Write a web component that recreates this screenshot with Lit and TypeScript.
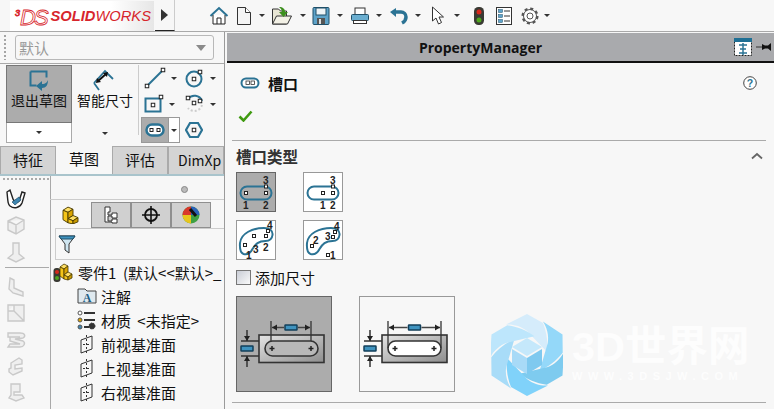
import { LitElement, html, css, svg } from "lit";
import { customElement } from "lit/decorators.js";

const BLUE = "#2b7394";

const icon = (w: number, h: number, body: unknown) =>
  html`<svg width=${w} height=${h} viewBox="0 0 ${w} ${h}">${body}</svg>`;

const handle = (x: number, y: number, s = 5) =>
  svg`<rect x=${x - s / 2} y=${y - s / 2} width=${s} height=${s} fill="#fff" stroke="#222"/>`;

const drop = html`<span class="drop"></span>`;

// top bar
const home = icon(20, 20, svg`
  <path d="M1.500 10 10 2l8.500 8" fill="none" stroke="#2b7394" stroke-width="2"/>
  <path d="M4 9v9h12V9" fill="#fff" stroke="#222"/>
  <path d="M8 18v-6h4v6" fill="none" stroke="#222"/>`);
const newDoc = icon(16, 20, svg`<path d="M1.500 1.500h8l5 5v12h-13z" fill="#f4f4f4" stroke="#333"/><path d="M9.500 1.500v5h5" fill="#fff" stroke="#333"/>`);
const openDoc = icon(22, 20, svg`
  <path d="M1.500 18V3h6l2 2h6v13z" fill="#e9e6d4" stroke="#333"/>
  <path d="M1.500 18l4-8h15l-4 8z" fill="#f3f1e6" stroke="#333"/>
  <path d="M8 1c4 0 6 2 6 5h3l-4.500 5L8 6h3c0-2-1-3-3-5z" fill="#3d8f1e"/>`);
const save = icon(18, 20, svg`
  <rect x="1" y="1.500" width="16" height="17" rx="1" fill="#5ea3c9" stroke="#1f4f68"/>
  <rect x="4" y="2" width="10" height="7" fill="#eef4f7" stroke="#1f4f68"/>
  <rect x="5" y="12" width="8" height="6" fill="#555"/><rect x="7" y="13" width="2" height="5" fill="#ddd"/>`);
const printer = icon(18, 20, svg`
  <rect x="4" y="2" width="10" height="7" fill="#fff" stroke="#333"/>
  <rect x="0.500" y="8.500" width="17" height="6" rx="1" fill="#6aaed0" stroke="#1f4f68"/>
  <rect x="2.500" y="14.500" width="13" height="3" fill="#fff" stroke="#333"/>`);
const undo = icon(18, 20, svg`
  <path d="M5 6h6a5 5 0 0 1 5 5c0 3-2 5-4 6" fill="none" stroke="#2b7394" stroke-width="3.500"/>
  <path d="M0 6l6-4v9z" fill="#2b7394"/>`);
const cursor = icon(14, 20, svg`<path d="M1.500 1v14l3.500-3 2.500 6 3-1.500-2.500-5.500h4.500z" fill="#fff" stroke="#333"/>`);
const light = icon(12, 20, svg`
  <rect x="1" y="1" width="10" height="18" rx="4.500" fill="#3a3a34"/>
  <circle cx="6" cy="6" r="2.500" fill="#d8281c"/><circle cx="6" cy="14" r="2.500" fill="#4fa61e"/>`);
const listIcon = icon(16, 20, svg`
  <rect x="0.500" y="1.500" width="15" height="17" fill="#fff" stroke="#333"/>
  ${[5, 10, 15].map(
    (y) => svg`<rect x="2.500" y=${y - 1.500} width="4" height="3" fill="#5ea3c9" stroke="#1f4f68" stroke-width=".5"/>
    <path d="M8 ${y}h6" stroke="#333"/>`
  )}`);
const gear = icon(18, 18, svg`
  <circle cx="9" cy="9" r="6.500" fill="#fff" stroke="#555" stroke-width="1"/>
  <circle cx="9" cy="9" r="7.300" fill="none" stroke="#555" stroke-width="2.500" stroke-dasharray="3 2.730"/>
  <circle cx="9" cy="9" r="3" fill="#fff" stroke="#555"/>`);

// sketch tools
const slotShape = (w: number, h: number, sw = 2.500) => svg`
  <rect x="1.500" y="1.500" width=${w - 3} height=${h - 3} rx=${(h - 3) / 2} fill="#fff" stroke=${BLUE} stroke-width=${sw}/>`;
const lineTool = icon(22, 22, svg`<path d="M3 19 19 3" stroke=${BLUE} stroke-width="2"/>${handle(3, 19, 3.500)}${handle(19, 3, 3.500)}`);
const circleTool = icon(20, 20, svg`
  <circle cx="9" cy="11" r="7.500" fill="none" stroke=${BLUE} stroke-width="2"/>${handle(9, 11, 3.500)}${handle(15, 4, 3.500)}`);
const rectTool = icon(20, 20, svg`
  <rect x="1.500" y="4.500" width="15" height="13" fill="none" stroke=${BLUE} stroke-width="2"/>${handle(9, 11, 3.500)}${handle(17, 3, 3.500)}`);
const arcTool = icon(20, 20, svg`
  <path d="M3 5a8 8 0 0 1 14 2" fill="none" stroke=${BLUE} stroke-width="2"/>
  <path d="M17 11a8 8 0 0 1-14 3" fill="none" stroke="#ccc" stroke-width="2" stroke-dasharray="2 2"/>
  ${handle(3, 4, 3.500)}${handle(9, 9, 3.500)}${handle(15, 7, 3.500)}`);
const slotTool = icon(20, 14, svg`${slotShape(20, 14)}${handle(6.500, 7, 3)}${handle(13.500, 7, 3)}`);
const polyTool = icon(18, 18, svg`
  <path d="M5 2h8l4 7-4 7H5L1 9z" fill="none" stroke=${BLUE} stroke-width="2.200"/>${handle(9, 9, 3.500)}`);
const exitIcon = icon(24, 24, svg`
  <path d="M3.500 3.500h16v6M3.500 3.500v14h6" fill="none" stroke=${BLUE} stroke-width="2"/>
  <path d="M9 18l6-5v3c4 0 5-2 6-4 0 5-2 8-6 8v3z" fill="#2b7394"/>`);
const dimIcon = icon(26, 24, svg`
  <path d="M2 15 13 3l8 8M7 22l-5-7" fill="none" stroke=${BLUE} stroke-width="1.800"/>
  <path d="M6 13l8-7" stroke="#111" stroke-width="2"/>
  <path d="M4 15l1-5 4 4zM16 4l-5 1 4 4z" fill="#111"/>`);

// type buttons
const typeIcon = (body: unknown) => icon(38, 38, body);
const num = (x: number, y: number, t: string) =>
  svg`<text x=${x - 3} y=${y + 3.500} font-family="Liberation Sans" font-weight="700" font-size="10" fill="#222">${t}</text>`;
const centerSlot = typeIcon(svg`
  <rect x="3.500" y="13.500" width="31" height="13" rx="6.500" fill="none" stroke=${BLUE} stroke-width="2"/>
  ${handle(9, 20, 3)}${handle(29, 20, 3)}${handle(29, 13.500, 3)}
  ${num(29, 7, "3")}${num(9, 32, "1")}${num(29, 32, "2")}`);
const straightSlot = typeIcon(svg`
  <rect x="3.500" y="13.500" width="31" height="13" rx="6.500" fill="none" stroke=${BLUE} stroke-width="2"/>
  ${handle(19, 20, 3)}${handle(29, 20, 3)}${handle(29, 13.500, 3)}
  ${num(29, 7, "3")}${num(19, 32, "1")}${num(29, 32, "2")}`);
const curve = svg`<path d="M3 22C4 12 16 7 27 7c6 0 9 3 8.500 7-.5 4-3 6-7 6-7 0-10 3-13 8-2 4-5 6-9 5-3-1-4-4-3.500-11z" fill="none" stroke=${BLUE} stroke-width="2"/>`;
const arcSlot = typeIcon(svg`${curve}
  ${handle(8, 24, 3)}${handle(17, 15, 3)}${handle(29, 15, 3)}${handle(31, 10, 3)}
  ${num(33, 4, "4")}${num(19, 28, "3")}${num(29, 26, "2")}${num(12, 34, "1")}`);
const arcSlot2 = typeIcon(svg`${curve}
  ${handle(8, 25, 3)}${handle(29, 16, 3)}${handle(31, 11, 3)}${handle(24, 34, 3)}
  ${num(33, 5, "4")}${num(12, 19, "2")}${num(24, 15, "3")}${num(29, 34, "1")}`);

// add-dimension pictures
const cross = (x: number, y: number) => svg`<path d="M${x - 2.500} ${y}h5M${x} ${y - 2.500}v5" stroke="#222" stroke-width="1.500"/>`;
const badge = (x: number, y: number) =>
  svg`<rect x=${x} y=${y} width="12" height="5" rx=".5" fill="#3f93bf" stroke="#123f5a" stroke-width="1.500"/>`;
const dimPicture = (a: number, b: number, slotFill: string, id: string) =>
  icon(94, 94, svg`
    <defs><linearGradient id=${id} x1="0" x2="1" y1="0" y2="1"><stop offset="0" stop-color="#e4e4e4"/><stop offset="1" stop-color="#8e8e8e"/></linearGradient></defs>
    <rect x="23" y="39" width="65" height="27.500" fill="url(#${id})" stroke="#333" stroke-width="1.600"/>
    <rect x="29" y="45" width="53" height="15" rx="7.500" fill=${slotFill} stroke="#333" stroke-width="1.600"/>
    ${cross(36, 52.500)}${cross(75, 52.500)}
    <path d="M${a} 25v${b === 82 ? 27 : 20}M${b} 25v${b === 82 ? 27 : 20}" stroke="#333" stroke-width="1.300"/>
    <path d="M${a + 1} 31.500h${(b - a) / 2 - 8}M${b - 1} 31.500h-${(b - a) / 2 - 8}" stroke="#444" stroke-width="1.300"/>
    <path d="M${a + 1} 31.500l5-3v6zM${b - 1} 31.500l-5-3v6z" fill="#222"/>
    ${badge((a + b) / 2 - 6, 29)}
    <path d="M5 45h18M5 60h18" stroke="#333" stroke-width="1.300"/>
    <path d="M11 34v11M11 60v11" stroke="#333" stroke-width="1.500"/>
    <path d="M11 45l-3-5h6zM11 60l-3 5h6z" fill="#222"/>
    ${badge(5, 50)}`);

// sidebar icons, greyed out apart from the first
const ghost = (d: string) => icon(22, 22, svg`<path d=${d} fill="#efefef" stroke="#c9c9c9" stroke-width="1.400"/>`);
const sideIcons = [
  ghost("M3 7l8-4 8 3v9l-8 5-8-4zM3 7l8 4 8-5M11 11v9"),
  ghost("M8 2h6v11l5 4-8 4-8-4 5-4z"),
  null,
  ghost("M5 2l4 2v8l9 4v4l-10-3-4-4z"),
  ghost("M3 3h16v16H3zM3 9h6V3M9 9l10 10"),
  ghost("M3 4h12c5 0 6 3 3 5l-8 1 8 2c3 2 1 6-3 6H3l2-3h10l-10-3V8h10H3z"),
  ghost("M6 8l8-5 3 2v4l-7 1v4l7-1v3l-9 4-4-3v-3l2-1z"),
  ghost("M6 3h9v8H9v3h8l2 3-8 3-7-3 2-3z"),
];
const magnet = icon(22, 22, svg`
  <path d="M2 4l3-2 3 9c1 3 4 4 6 2l3-9 3 1-3 10c-2 5-8 6-12 3-2-2-2-3-3-14z" fill="#fff" stroke="#222" stroke-width="1.400"/>
  <path d="M7 14l7-5 2 3-6 5z" fill="#3f86b0" stroke="#123f5a" stroke-width=".6"/>`);

// tree: the yellow L block is shared by the tab and the root row
const block = svg`
  <g stroke="#4a3b00" stroke-width=".8" stroke-linejoin="round">
    <path d="M0 5 4 2l4 2-4 3z" fill="#ffe066"/>
    <path d="M0 5v9l4 3V7z" fill="#f5c518"/>
    <path d="M4 7l4-3v6l-4 3z" fill="#d9a400"/>
    <path d="M4 13l4-3 4 2-4 3z" fill="#ffe066"/>
    <path d="M4 13v4l4 1v-3z" fill="#f5c518"/>
    <path d="M8 15l4-3v4l-4 2z" fill="#c99a00"/>
  </g>`;
const partIcon = icon(20, 18, svg`<g transform="translate(2 -1) scale(1.250 1.050)">${block}</g>`);
const partTree = icon(22, 20, svg`
  <rect x="0.500" y="6" width="7" height="14" rx="3" fill="#3a3a34"/>
  <circle cx="4" cy="10" r="2" fill="#d8281c"/><circle cx="4" cy="16" r="2" fill="#4fa61e"/>
  <g transform="translate(7 0)">${block}</g>`);
const annot = icon(20, 16, svg`
  <path d="M1 15V1h7l2 2h9v12z" fill="#dfe9ef" stroke="#444"/>
  <text x="10" y="13.500" text-anchor="middle" font-family="Liberation Serif" font-weight="700" font-size="12" fill="#1f5f86">A</text>`);
const material = icon(20, 20, svg`
  ${[3, 10, 17].map(
    (y, i) => svg`<circle cx="3" cy=${y} r="2" fill=${i == 1 ? "#e0a500" : i == 2 ? "#3f86b0" : "#fff"} stroke="#555"/>
      <path d="M7 ${y}h${i == 2 ? 5 : 11}" stroke="#333" stroke-width="2"/>`
  )}
  <circle cx="15" cy="16" r="3" fill="#333" stroke="#333" stroke-dasharray="1.500 1"/>`);
const plane = icon(14, 20, svg`
  <path d="M1 6l11-4v13L1 19z" fill="none" stroke="#333"/>
  <path d="M6.500 1v19M3 10.500h7" fill="none" stroke="#333" stroke-dasharray="2 2"/>`);

const rows = [
  { icon: annot, label: "注解" },
  { icon: material, label: "材质 <未指定>" },
  { icon: plane, label: "前视基准面" },
  { icon: plane, label: "上视基准面" },
  { icon: plane, label: "右视基准面" },
];

const blades = ["#d5ecfb", "#94d8f9", "#7ecbef", "#80d2fa", "#a8dcf8", "#bde6fc"];
const hexLogo = icon(72, 82, svg`
  <g transform="translate(36 41)">
    ${blades.map(
      (c, i) => svg`<path transform="rotate(${i * 60})" fill=${c}
        d="M-21-30.500 0-41 16-32C20-22 21-12 20-3L0-24C-6-29-14-31-21-30.500z"/>`
    )}
    <path d="M0-17 15-8 0 1-15-8z" fill="#c5e8fb"/>
    <path d="M-15-6 0 3V19L-15 10z" fill="#a8daf7"/>
    <path d="M15-6 0 3V19L15 10z" fill="#7fc9ef"/>
  </g>`);

@customElement("app-root")
export class AppRoot extends LitElement {
  static styles = css`
    :host {
      display: block;
      width: 774px;
      height: 409px;
      overflow: hidden;
      position: relative;
      background: #f7f7f7;
      font-family: "Noto Sans CJK SC", "Liberation Sans", sans-serif;
      color: #111;
    }
    svg { display: block; flex: none; }
    .drop {
      flex: none;
      width: 0;
      height: 0;
      border: 3px solid transparent;
      border-top: 3.500px solid #333;
      border-bottom: 0;
    }

    /* top bar */
    .top { display: flex; align-items: center; height: 31px; }
    .logo {
      margin-left: 10px;
      width: 144px;
      height: 30px;
      flex: none;
      display: flex;
      align-items: center;
      gap: 4px;
      padding-left: 5px;
      box-sizing: border-box;
      background: linear-gradient(90deg, #fff, #fff 70%, #e6e6e6);
      color: #d7252c;
      font-family: "Liberation Sans", sans-serif;
      font-style: italic;
      white-space: nowrap;
    }
    .ds {
      font-size: 22px;
      letter-spacing: -2px;
      line-height: 26px;
      color: transparent;
      -webkit-text-stroke: 0.800px #d7252c;
    }
    .ds i { font-size: 9px; vertical-align: 9px; letter-spacing: 0; }
    .solid { font-size: 14.700px; font-weight: 700; }
    .solid i { font-weight: 400; }
    .more {
      width: 20px;
      height: 31px;
      margin-left: 1px;
      flex: none;
      display: flex;
      align-items: center;
      justify-content: center;
      box-sizing: border-box;
      border-bottom: 1px solid #222;
      border-right: 1px solid #ccc;
    }
    .more::before {
      content: "";
      border: 6px solid transparent;
      border-left: 7px solid #333;
      border-right: 0;
    }
    .quick { display: flex; align-items: center; margin-left: 34px; height: 31px; }
    .g { display: flex; align-items: center; gap: 7px; margin-right: 6px; }
    .g:first-child { margin-right: 7px; }
    .g.wide { margin-right: 8px; }
    .g.wider { margin-right: 10px; }
    .g.arrow { gap: 9px; margin-right: 13px; }
    .g.plain { margin-right: 11px; }
    .g.last { margin-right: 9px; }
    .g.cog { gap: 5px; }

    /* main split */
    .main { display: flex; height: 378px; border-top: 1px solid #a9a9a9; }
    .left { width: 224px; flex: none; overflow: hidden; border-right: 1px solid #9a9a9a; }
    .right { flex: 1; margin-left: 2px; min-width: 0; }

    .combo-row {
      height: 31px;
      display: flex;
      align-items: center;
      gap: 9px;
      padding-left: 4px;
      border-bottom: 1px solid #a9a9a9;
    }
    .grip {
      width: 2px;
      height: 25px;
      flex: none;
      background: repeating-linear-gradient(#a5a5a5 0 2px, transparent 2px 4px);
    }
    .combo {
      width: 199px;
      height: 25px;
      box-sizing: border-box;
      border: 1px solid #b8b8b8;
      border-radius: 3px;
      display: flex;
      align-items: center;
      justify-content: space-between;
      padding: 0 7px 0 3px;
      font-size: 15px;
      color: #9a9a9a;
    }
    .combo .drop { border-width: 5px; border-top-width: 6px; border-top-color: #8a8a8a; border-bottom: 0; }

    /* ribbon */
    .ribbon { display: flex; height: 81px; padding-top: 1px; padding-left: 6px; box-sizing: border-box; }
    .big {
      width: 66px;
      flex: none;
      display: flex;
      flex-direction: column;
      align-items: center;
      font-size: 14px;
      line-height: 20px;
      white-space: nowrap;
    }
    .big .face { height: 58px; width: 100%; box-sizing: border-box; display: flex; flex-direction: column; align-items: center; padding-top: 2px; border: 1px solid transparent; }
    .big .face span { margin-top: -2px; }
    .big .tail { height: 20px; width: 100%; box-sizing: border-box; display: flex; align-items: center; justify-content: center; }
    .big.on .face { background: #acacac; border-color: #777; }
    .big.on .tail { border: 1px solid #aaa; border-top: 0; background: #fff; }
    .sep { width: 1px; height: 70px; background: #ccc; margin: 0 1px 0 0; flex: none; }
    .tools {
      display: grid;
      grid-template-columns: 41px 42px;
      grid-template-rows: 26px 26px 26px;
      align-items: center;
      margin-left: 1px;
    }
    .tool { display: flex; align-items: center; gap: 5px; padding-left: 3px; }
    .slotbtn {
      display: flex;
      align-items: stretch;
      height: 26px;
      width: 39px;
      box-sizing: border-box;
      border: 1px solid #999;
    }
    .slotbtn .on { width: 26px; background: #acacac; display: flex; align-items: center; justify-content: center; }
    .slotbtn .rest { flex: 1; background: #fff; display: flex; align-items: center; justify-content: center; border-left: 1px solid #999; }

    /* tabs */
    .tabs { display: flex; height: 28px; margin-top: 1px; border-bottom: 2px solid #a9c4cc; }
    .tab {
      width: 56px;
      box-sizing: border-box;
      background: #d4d4d4;
      border: 1px solid #aaa;
      border-bottom: 0;
      font-size: 15px;
      text-align: center;
      line-height: 26px;
      white-space: nowrap;
      overflow: hidden;
    }
    .tab.on { background: #f7f7f7; border: 0; }
    .tab.latin { text-align: left; padding-left: 9px; font-size: 14px; }

    /* feature manager */
    .fm { display: flex; height: 236px; }
    .side { width: 51px; flex: none; border-right: 1px solid #a9a9a9; box-sizing: border-box; padding: 2px 0 0 3px; }
    .side .dots { width: 46px; height: 2px; background: repeating-linear-gradient(90deg, #aaa 0 2px, transparent 2px 4px); margin-bottom: 6px; }
    .side .ico { height: 26.300px; display: flex; align-items: center; padding-left: 2px; }
    .side hr { border: 0; border-top: 1px solid #aaa; margin: 2px 1px 6px 2px; }
    .tree { flex: 1; min-width: 0; }
    .knob { height: 23px; display: flex; align-items: center; padding-left: 131px; border-bottom: 1px solid #ccc; margin-left: -1px; }
    .knob::before { content: ""; width: 5px; height: 5px; border-radius: 50%; background: #bbb; border: 1px solid #888; margin-top: 4px; }
    .fmtabs { display: flex; margin-top: 2px; height: 26px; }
    .fmtab { width: 40px; box-sizing: border-box; background: #d0d0d0; border: 1px solid #8f8f8f; display: flex; align-items: center; justify-content: center; }
    .fmtab.on { background: #f7f7f7; border: 0; }
    .filter { height: 32px; margin-left: 4px; border: 1px solid #ccc; border-right: 0; display: flex; align-items: center; padding-left: 2px; box-sizing: border-box; }
    .part { display: flex; align-items: center; gap: 3px; height: 24px; margin: 0 0 0 2px; font-size: 15px; white-space: nowrap; overflow: hidden; }
    .row { display: flex; align-items: center; height: 24px; font-size: 15px; white-space: nowrap; padding-left: 26px; gap: 4px; word-spacing: 3px; }
    .row .slotico { width: 20px; display: flex; justify-content: center; flex: none; }

    /* property manager */
    .pm-head {
      height: 30px;
      margin-top: 1px;
      box-sizing: border-box;
      background: #a9aaad;
      border-bottom: 2px solid #111;
      display: flex;
      align-items: center;
      justify-content: flex-end;
      gap: 4px;
      padding-right: 2px;
      position: relative;
    }
    .pm-head b { position: absolute; left: 0; right: 0; padding-right: 40px; text-align: center; font: 700 14px "Open Sans", "Liberation Sans", sans-serif; }
    .pm-body { padding: 0 8px 0 5px; }
    .name { display: flex; align-items: center; height: 40px; padding: 0 8px; font-size: 15px; font-weight: 700; gap: 8px; }
    .name .help { margin-left: auto; margin-right: 1px; }
    .ok { height: 26px; padding-left: 6px; display: flex; align-items: center; }
    .rule { border: 0; border-top: 1px solid #aaa; margin: 0; }
    .rule.first { margin-top: 11px; }
    .section { display: flex; align-items: center; justify-content: space-between; height: 29px; padding: 0 3px 2px 4px; font-size: 15.500px; font-weight: 700; color: #333; }
    .types { display: grid; grid-template-columns: 40px 40px; grid-auto-rows: 40px; column-gap: 27px; row-gap: 8px; margin-left: 4px; }
    .type { box-sizing: border-box; border: 1px solid #999; background: #fff; display: flex; align-items: center; justify-content: center; }
    .type.on, .pic.on { background: #acacac; border-color: #666; }
    .check { display: flex; align-items: center; gap: 4px; height: 20px; margin: 7px 0 0 4px; font-size: 15px; }
    .box { width: 15px; height: 15px; box-sizing: border-box; border: 1px solid #777; background: linear-gradient(135deg, #c9cdd6, #fafafa); }
    .pics { display: flex; gap: 27px; margin: 9px 0 10px 4px; }
    .pic { width: 96px; height: 96px; box-sizing: border-box; border: 1px solid #999; }
    .pic svg { margin: -1px; }

    /* watermark lies over the panel */
    .mark { position: absolute; left: 491px; top: 314px; display: flex; gap: 9px; pointer-events: none; }
    .mark .t { color: #fdfdfd; font-weight: 700; font-size: 41.500px; line-height: 42px; margin-top: 12px; white-space: nowrap; font-family: "Liberation Sans", "Noto Sans CJK SC", sans-serif; }
    .mark .u { font: 700 11px/12px "Liberation Sans", sans-serif; letter-spacing: 5.500px; margin-top: 2px; }
  `;

  render() {
    return html`
      <div class="top">
        <div class="logo">
          <span class="ds"><i>3</i>DS</span>
          <span class="solid">SOLID<i>WORKS</i></span>
        </div>
        <div class="more"></div>
        <div class="quick">
          <div class="g">${home}</div>
          <div class="g">${newDoc}${drop}</div>
          <div class="g">${openDoc}${drop}</div>
          <div class="g wide">${save}${drop}</div>
          <div class="g wide">${printer}${drop}</div>
          <div class="g wider">${undo}${drop}</div>
          <div class="g arrow">${cursor}${drop}</div>
          <div class="g plain">${light}</div>
          <div class="g last">${listIcon}</div>
          <div class="g cog">${gear}${drop}</div>
        </div>
      </div>

      <div class="main">
        <div class="left">
          <div class="combo-row">
            <div class="grip"></div>
            <div class="combo">默认<span class="drop"></span></div>
          </div>
          <div class="ribbon">
            <div class="big on">
              <div class="face">${exitIcon}<span>退出草图</span></div>
              <div class="tail">${drop}</div>
            </div>
            <div class="big">
              <div class="face">${dimIcon}<span>智能尺寸</span></div>
              <div class="tail">${drop}</div>
            </div>
            <div class="sep"></div>
            <div class="tools">
              <div class="tool">${lineTool}${drop}</div>
              <div class="tool">${circleTool}${drop}</div>
              <div class="tool">${rectTool}${drop}</div>
              <div class="tool">${arcTool}${drop}</div>
              <div class="slotbtn">
                <div class="on">${slotTool}</div>
                <div class="rest">${drop}</div>
              </div>
              <div class="tool">${polyTool}</div>
            </div>
          </div>
          <div class="tabs">
            <div class="tab">特征</div>
            <div class="tab on">草图</div>
            <div class="tab">评估</div>
            <div class="tab latin">DimXp</div>
          </div>
          <div class="fm">
            <div class="side">
              <div class="dots"></div>
              <div class="ico">${magnet}</div>
              ${sideIcons.map((i) => (i ? html`<div class="ico">${i}</div>` : html`<hr />`))}
            </div>
            <div class="tree">
              <div class="knob"></div>
              <div class="fmtabs">
                <div class="fmtab on">${partIcon}</div>
                <div class="fmtab">
                  ${icon(16, 18, svg`<path d="M2 1h5v5H5v3h4V7h5v5H9v-2H5v5h4v-2h5v4H9v-1H2z" fill="#fff" stroke="#333"/>`)}
                </div>
                <div class="fmtab">
                  ${icon(18, 18, svg`<circle cx="9" cy="9" r="6" fill="none" stroke="#111" stroke-width="1.800"/><path d="M9 0v18M0 9h18" stroke="#111" stroke-width="1.600"/>`)}
                </div>
                <div class="fmtab">
                  ${icon(18, 18, svg`
                    <circle cx="9" cy="9" r="8.500" fill="#3ea043"/>
                    <path d="M9 .5A8.500 8.500 0 0 0 .5 9H9z" fill="#d9382c"/>
                    <path d="M.5 9A8.500 8.500 0 0 0 9 17.500V9z" fill="#e8c51d"/>
                    <path d="M9 .5A8.500 8.500 0 0 1 17.500 9L9 9z" fill="#2b62b8"/>
                    <path d="M8 3l6 7" stroke="#111" stroke-width="3"/>`)}
                </div>
              </div>
              <div class="filter">
                ${icon(18, 20, svg`<path d="M1 2h16l-6 8v9l-4-3v-6z" fill="#cfe6f1" stroke="#333"/><path d="M1 2h16l-2 3H3z" fill="#3f93bf" stroke="#1f4f68"/>`)}
              </div>
              <div class="part">${partTree}<span>零件1 &nbsp;(默认&lt;&lt;默认&gt;_</span></div>
              ${rows.map(
                (r) => html`<div class="row"><span class="slotico">${r.icon}</span><span>${r.label}</span></div>`
              )}
            </div>
          </div>
        </div>

        <div class="right">
          <div class="pm-head">
            <b>PropertyManager</b>
            ${icon(18, 18, svg`
              <rect x=".5" y=".5" width="17" height="17" fill="#fff" stroke="#222" stroke-dasharray="2 1"/>
              <rect x="0" y="0" width="18" height="4" fill="#1f6f94"/>
              <path d="M9 5v12M5 7h8M5 15h8M6 11h6" stroke="#2b7394" stroke-width="1.500"/>`)}
            ${icon(16, 10, svg`<path d="M0 5h6" stroke="#333"/><path d="M6 2l3 1.500h3L15 1v8l-3-2.500H9L6 8z" fill="#111"/>`)}
          </div>
          <div class="pm-body">
            <div class="name">
              ${icon(20, 12, svg`${slotShape(20, 12, 2)}<rect x="6" y="4" width="3.500" height="3.500" fill="#fff" stroke="#333" stroke-width=".8"/><rect x="11" y="4" width="3.500" height="3.500" fill="#fff" stroke="#333" stroke-width=".8"/>`)}
              <span>槽口</span>
              <span class="help">
                ${icon(14, 14, svg`
                  <circle cx="7" cy="7" r="6.300" fill="#fff" stroke="#444"/>
                  <text x="7" y="11" text-anchor="middle" font-family="Liberation Sans" font-weight="700" font-size="10.500" fill="#2b7394">?</text>`)}
              </span>
            </div>
            <div class="ok">
              ${icon(15, 12, svg`<path d="M1.500 6.500 5.500 10.500 13.500 1.500" fill="none" stroke="#3f9a10" stroke-width="2.600"/>`)}
            </div>
            <hr class="rule first" />
            <div class="section">
              <span>槽口类型</span>
              ${icon(12, 8, svg`<path d="M1 6.500 6 2l5 4.500" fill="none" stroke="#666" stroke-width="1.800"/>`)}
            </div>
            <div class="types">
              <div class="type on">${centerSlot}</div>
              <div class="type">${straightSlot}</div>
              <div class="type">${arcSlot}</div>
              <div class="type">${arcSlot2}</div>
            </div>
            <div class="check"><span class="box"></span><span>添加尺寸</span></div>
            <div class="pics">
              <div class="pic on">${dimPicture(35, 75, "#b8b8b8", "gradA")}</div>
              <div class="pic">${dimPicture(29, 82, "#fff", "gradB")}</div>
            </div>
            <hr class="rule" />
          </div>
        </div>
      </div>

      <div class="mark">
        ${hexLogo}
        <div>
          <div class="t">3D世界网</div>
          <div class="t u">WWW.3DSJW.COM</div>
        </div>
      </div>
    `;
  }
}
